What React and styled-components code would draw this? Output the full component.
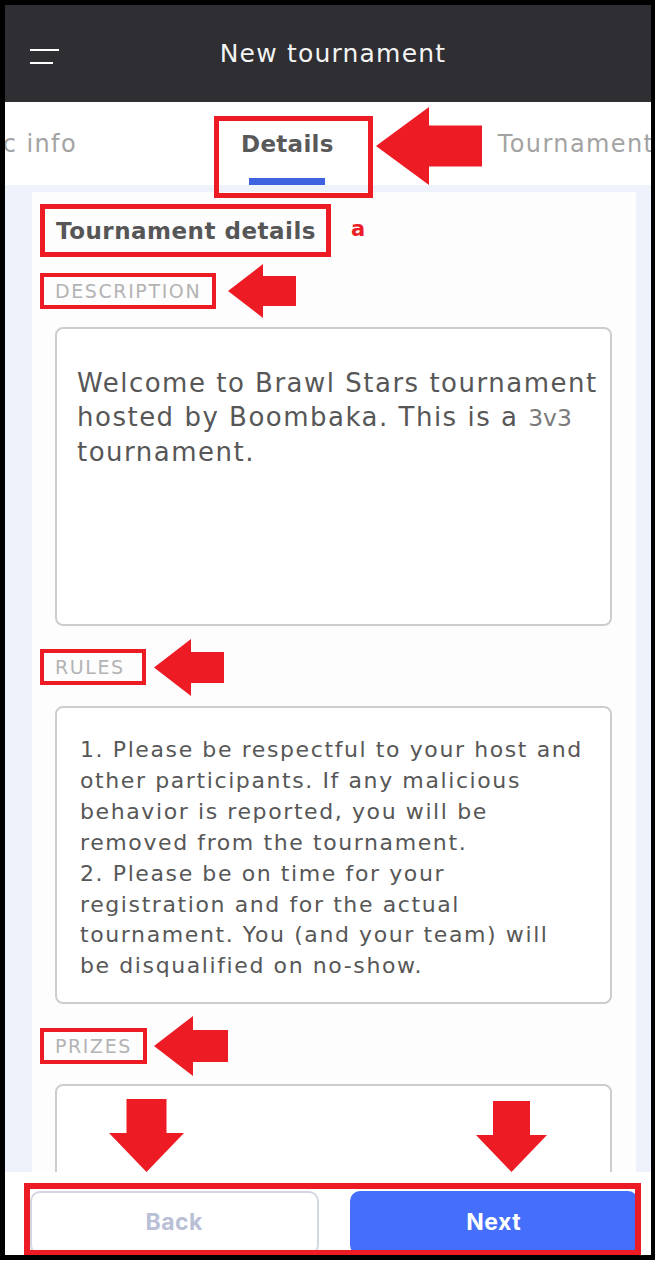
import React from "react";
import styled, { createGlobalStyle } from "styled-components";

const FONT = `"DejaVu Sans", "Noto Sans", sans-serif`;
const RED = "#ed1c24";

const GlobalStyle = createGlobalStyle`
  html, body {
    margin: 0;
    padding: 0;
    background: #ffffff;
  }
  *, *::before, *::after {
    box-sizing: border-box;
  }
`;

const LeftArrow = ({ w, h, head, shaft }) => {
  const t = (h - shaft) / 2;
  const b = (h + shaft) / 2;
  return (
    <svg width={w} height={h} viewBox={`0 0 ${w} ${h}`}>
      <polygon
        fill={RED}
        points={`0,${h / 2} ${head},0 ${head},${t} ${w},${t} ${w},${b} ${head},${b} ${head},${h}`}
      />
    </svg>
  );
};

const DownArrow = ({ w, h, head, shaft }) => {
  const l = (w - shaft) / 2;
  const r = (w + shaft) / 2;
  const s = h - head;
  return (
    <svg width={w} height={h} viewBox={`0 0 ${w} ${h}`}>
      <polygon
        fill={RED}
        points={`${l},0 ${r},0 ${r},${s} ${w},${s} ${w / 2},${h} 0,${s} ${l},${s}`}
      />
    </svg>
  );
};

export default function App() {
  return (
    <>
      <GlobalStyle />
      <Frame>
        <Header>
          <MenuButton>
            <MenuLine $w={29} />
            <MenuLine $w={23} />
          </MenuButton>
          <Title>New tournament</Title>
          <span />
        </Header>

        <TabBar>
          <Tab $first>Basic info</Tab>
          <Tab $active>
            Details
            <TabArrow>
              <LeftArrow w={106} h={78} head={53} shaft={41} />
            </TabArrow>
          </Tab>
          <Tab>Tournament format</Tab>
        </TabBar>

        <Content>
          <Card>
            <TitleRow>
              <TitleMark>Tournament details</TitleMark>
              <Note>a</Note>
            </TitleRow>

            <Section $top={16} $gap={18}>
              <LabelRow>
                <LabelMark>DESCRIPTION</LabelMark>
                <ArrowSlot $gap={12}>
                  <LeftArrow w={68} h={54} head={35} shaft={30} />
                </ArrowSlot>
              </LabelRow>
              <Field $h={299} $size={26} $ls={1.5} $lh={34} $pt={37} $pl={20}>
                Welcome to Brawl Stars tournament{"\n"}hosted by Boombaka. This is a{" "}
                <Faint>3v3</Faint>
                {"\n"}tournament.
              </Field>
            </Section>

            <Section $top={23} $gap={21}>
              <LabelRow>
                <LabelMark>RULES</LabelMark>
                <ArrowSlot $gap={8}>
                  <LeftArrow w={70} h={57} head={37} shaft={31} />
                </ArrowSlot>
              </LabelRow>
              <Field $h={298} $size={22} $ls={1.6} $lh={30.9} $pt={27} $pl={23}>
                {`1. Please be respectful to your host and
other participants. If any malicious
behavior is reported, you will be
removed from the tournament.
2. Please be on time for your
registration and for the actual
tournament. You (and your team) will
be disqualified on no-show.`}
              </Field>
            </Section>

            <Section $top={24} $gap={20}>
              <LabelRow>
                <LabelMark>PRIZES</LabelMark>
                <ArrowSlot $gap={7}>
                  <LeftArrow w={74} h={60} head={39} shaft={32} />
                </ArrowSlot>
              </LabelRow>
              <Field $h={260} $size={22} $ls={1.6} $lh={31} $pt={27} $pl={23} />
            </Section>
          </Card>
        </Content>

        <BottomBar>
          <DownSlot $left={104}>
            <DownArrow w={75} h={73} head={39} shaft={40} />
          </DownSlot>
          <DownSlot $left={471}>
            <DownArrow w={71} h={71} head={37} shaft={37} />
          </DownSlot>
          <Button>Back</Button>
          <Button $primary>Next</Button>
          <BarMark />
        </BottomBar>
      </Frame>
    </>
  );
}

const Frame = styled.div`
  width: 655px;
  height: 1260px;
  border: 5px solid #000000;
  border-right-width: 4px;
  display: flex;
  flex-direction: column;
  overflow: hidden;
  background: #ffffff;
  font-family: ${FONT};
`;

const Header = styled.header`
  flex: 0 0 97px;
  display: grid;
  grid-template-columns: 64px 1fr 54px;
  align-items: center;
  background: #2e2e33;
`;

const MenuButton = styled.div`
  display: flex;
  flex-direction: column;
  gap: 11px;
  padding-left: 25px;
  margin-top: 6px;
`;

const MenuLine = styled.span`
  display: block;
  width: ${(p) => p.$w}px;
  height: 2px;
  background: #ffffff;
`;

const Title = styled.h1`
  margin: 0;
  text-align: center;
  color: #f4f4f4;
  font-size: 25px;
  font-weight: 400;
  letter-spacing: 1.2px;
`;

const TabBar = styled.nav`
  flex: 0 0 83px;
  display: grid;
  grid-template-columns: 154px auto auto;
  background: #ffffff;
`;

const Tab = styled.div`
  position: relative;
  display: flex;
  align-items: center;
  justify-content: ${(p) => (p.$first ? "flex-end" : "flex-start")};
  padding: ${(p) => (p.$first ? "0 82px 0 0" : "0 82px")};
  white-space: nowrap;
  font-size: ${(p) => (p.$active ? 23 : 24)}px;
  letter-spacing: ${(p) => (p.$active ? 0.3 : 1.4)}px;
  font-weight: ${(p) => (p.$active ? 700 : 400)};
  color: ${(p) => (p.$active ? "#595959" : "#a3a3a3")};
  z-index: ${(p) => (p.$active ? 3 : "auto")};

  ${(p) =>
    p.$active &&
    `
    &::before {
      content: "";
      position: absolute;
      left: 50%;
      bottom: 0;
      width: 76px;
      height: 7px;
      margin-left: -38px;
      background: #3f63e0;
    }
    &::after {
      content: "";
      position: absolute;
      left: 55px;
      top: 14px;
      width: 159px;
      height: 82px;
      border: 5px solid ${RED};
    }
  `}
`;

const TabArrow = styled.div`
  position: absolute;
  left: 217px;
  top: 5px;
  display: flex;
`;

const Content = styled.main`
  flex: 1;
  min-height: 0;
  overflow: hidden;
  background: #eef2fb;
  padding: 7px 15px 0 27px;
`;

const Card = styled.section`
  height: 100%;
  background: #fdfdfe;
  padding: 12px 24px 0 8px;
  display: flex;
  flex-direction: column;
`;

const TitleRow = styled.div`
  display: flex;
  align-items: center;
`;

const TitleMark = styled.h2`
  margin: 0;
  height: 53px;
  display: flex;
  align-items: center;
  padding: 0 10px 0 11px;
  border: 5px solid ${RED};
  font-size: 23px;
  font-weight: 700;
  letter-spacing: 0.5px;
  color: #565656;
`;

const Note = styled.span`
  margin-left: 20px;
  margin-top: -4px;
  font-size: 21px;
  font-weight: 700;
  color: ${RED};
`;

const Section = styled.div`
  display: flex;
  flex-direction: column;
  gap: ${(p) => p.$gap}px;
  margin-top: ${(p) => p.$top}px;
`;

const LabelRow = styled.div`
  display: flex;
  align-items: center;
`;

const LabelMark = styled.span`
  height: 36px;
  min-width: 106px;
  display: flex;
  align-items: center;
  padding: 0 11px;
  border: 4px solid ${RED};
  font-size: 19px;
  color: #b3b3b3;
  letter-spacing: 1.6px;
`;

const ArrowSlot = styled.span`
  display: flex;
  margin: -14px 0 -14px ${(p) => p.$gap}px;
`;

const Field = styled.div`
  flex-shrink: 0;
  margin-left: 15px;
  height: ${(p) => p.$h}px;
  border: 2px solid #cdcdcd;
  border-radius: 8px;
  background: #ffffff;
  padding: ${(p) => p.$pt}px 4px 0 ${(p) => p.$pl}px;
  white-space: pre-line;
  font-size: ${(p) => p.$size}px;
  letter-spacing: ${(p) => p.$ls}px;
  line-height: ${(p) => p.$lh}px;
  color: #575757;
`;

const Faint = styled.span`
  color: #7a7a7a;
  font-size: 0.9em;
  letter-spacing: 0;
`;

const BottomBar = styled.footer`
  position: relative;
  flex: 0 0 80px;
  display: grid;
  grid-template-columns: 1fr 1fr;
  gap: 31px;
  padding: 19px 13px 0 25px;
  background: #ffffff;
`;

const Button = styled.button`
  height: 64px;
  border-radius: 10px;
  border: 2px solid ${(p) => (p.$primary ? "#456ffb" : "#d3d7e2")};
  background: ${(p) => (p.$primary ? "#456ffb" : "#ffffff")};
  color: ${(p) => (p.$primary ? "#ffffff" : "#b9c0d6")};
  font-family: Inter, "Liberation Sans", sans-serif;
  font-size: 23px;
  font-weight: 700;
  letter-spacing: 0.5px;
  padding-bottom: 4px;
`;

const BarMark = styled.div`
  position: absolute;
  left: 19px;
  right: 10px;
  top: 11px;
  bottom: -1px;
  border: 6px solid ${RED};
  pointer-events: none;
`;

const DownSlot = styled.div`
  position: absolute;
  bottom: 100%;
  left: ${(p) => p.$left}px;
  display: flex;
  z-index: 2;
`;
